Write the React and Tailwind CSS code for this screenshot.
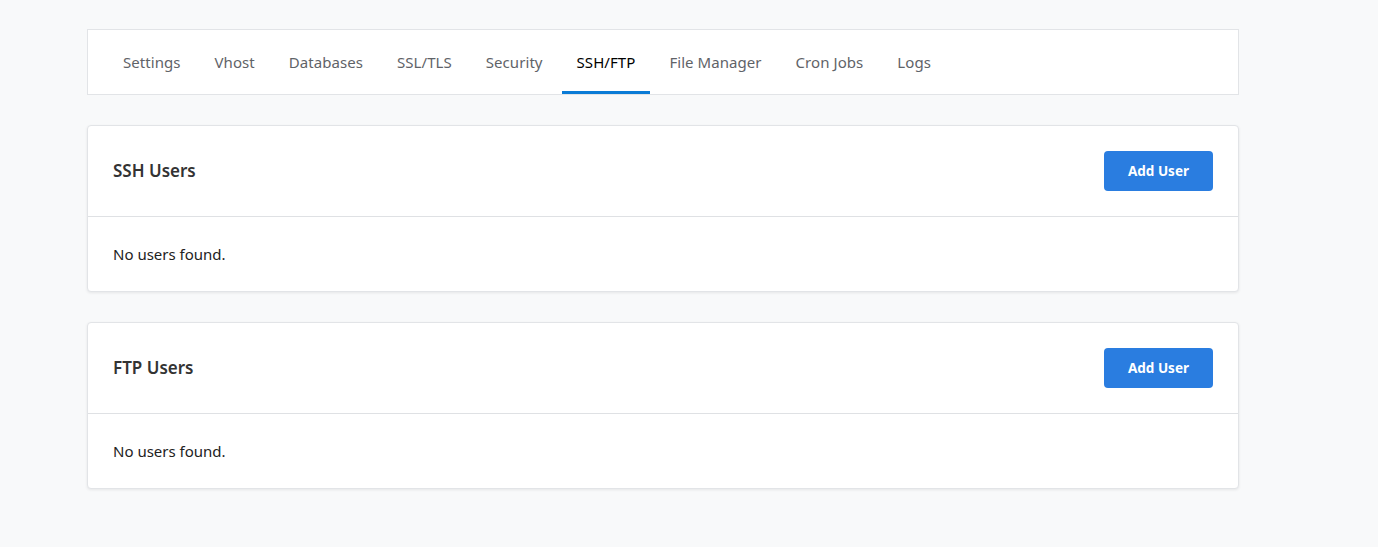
import React from "react";

const tabs = ["Settings", "Vhost", "Databases", "SSL/TLS", "Security", "SSH/FTP", "File Manager", "Cron Jobs", "Logs"];

function Card({ title }) {
  return (
    <div className="bg-white border border-[#e2e4e7] rounded-[4px] shadow-[0_1px_3px_rgba(0,0,0,0.08)]">
      <div className="flex items-center justify-between h-[91px] pl-[25px] pr-[25px] border-b border-[#dfe1e4]">
        <h2 className="text-[17px] font-semibold text-[#333]">{title}</h2>
        <button className="w-[109px] h-[40px] rounded-[4px] bg-[#2a7de0] text-white text-[13.5px] font-bold">Add User</button>
      </div>
      <div className="h-[74px] flex items-center pl-[25px] text-[15px] text-[#222]">No users found.</div>
    </div>
  );
}

export default function App() {
  return (
    <div className="min-h-[547px] bg-[#f8f9fa] font-['Noto_Sans','Open_Sans',sans-serif]">
      <div className="w-[1152px] ml-[87px] pt-[29px] flex flex-col gap-[30px]">
        <nav className="bg-white border border-[#e2e4e7] h-[66px] flex items-stretch pl-[20px] gap-[4px]">
          {tabs.map((t) => {
            const active = t === "SSH/FTP";
            return (
              <div
                key={t}
                className={
                  active
                    ? "px-[15px] flex items-center text-[15px] tracking-[0.06px] text-black border-b-[3px] border-[#0a7bd6] pt-[3px]"
                    : "px-[15px] flex items-center text-[15px] tracking-[0.06px] text-[#5f6368] border-b-[3px] border-transparent pt-[3px]"
                }
              >
                {t}
              </div>
            );
          })}
        </nav>
        <Card title="SSH Users" />
        <Card title="FTP Users" />
      </div>
    </div>
  );
}
